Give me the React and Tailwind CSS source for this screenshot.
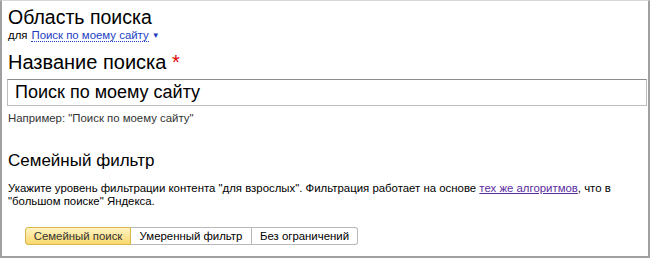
export default function App() {
  return (
    <div
      className="w-[650px] h-[258px] bg-white border-l-2 border-r-2 border-b-2 border-t border-l-[#a0a0a0] border-r-[#a0a0a0] border-b-[#a0a0a0] border-t-[#d8d8d8] text-black overflow-hidden"
      style={{ fontFamily: '"Liberation Sans", Arial, sans-serif' }}
    >
      <div className="pl-[5px] pr-[1px]">
        <div className="pt-[4px] text-[19.5px] leading-[24px] pl-[1px]">Область поиска</div>
        <div className="text-[11.4px] leading-[13px] pl-[1px] flex items-center">
          <span>для</span>
          <span className="ml-[4px] text-[#1a3dc1] border-b border-dotted border-[#1a3dc1] leading-[12px]">Поиск по моему сайту</span>
          <span className="ml-[3px] text-[#1a3dc1] text-[8px]">▼</span>
        </div>
        <div className="mt-[8px] text-[20px] leading-[24px] pl-[1px]">
          Название поиска <span className="text-[#e00000]">*</span>
        </div>
        <div className="mt-[5px] h-[27px] border border-[#bdbdbd] border-t-[#8c8c8c] flex items-center pl-[7px] text-[18px]">
          Поиск по моему сайту
        </div>
        <div className="mt-[5px] text-[11.4px] leading-[14px] text-[#333] pl-[1px]">
          Например: "Поиск по моему сайту"
        </div>
        <div className="mt-[25px] text-[17px] leading-[22px] pl-[1px]">Семейный фильтр</div>
        <div className="mt-[10px] text-[11.4px] leading-[13px] pl-[1px]">
          Укажите уровень фильтрации контента "для взрослых". Фильтрация работает на основе{" "}
          <a className="text-[#5b2c9e] underline">тех же алгоритмов</a>, что в
          <br />
          "большом поиске" Яндекса.
        </div>
        <div className="mt-[19px] ml-[18px] flex text-[11.4px] leading-[16px]">
          <div className="w-[106px] h-[18px] flex items-center justify-center rounded-l-[3px] border border-[#d9b54a] bg-gradient-to-b from-[#fff3c2] to-[#f9d86a] text-[#333]">
            Семейный поиск
          </div>
          <div className="w-[121px] h-[18px] flex items-center justify-center border-y border-r border-[#b8b8b8] bg-white">
            Умеренный фильтр
          </div>
          <div className="w-[106px] h-[18px] flex items-center justify-center rounded-r-[3px] border-y border-r border-[#b8b8b8] bg-white">
            Без ограничений
          </div>
        </div>
      </div>
    </div>
  );
}
